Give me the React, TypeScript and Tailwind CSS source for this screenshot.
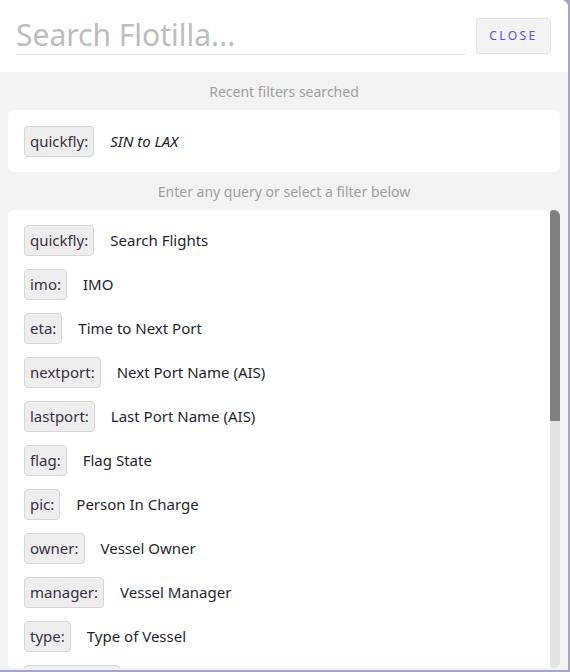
import React from 'react';

const recent = [{ key: 'quickfly:', value: 'SIN to LAX' }];

const filters = [
  { key: 'quickfly:', label: 'Search Flights' },
  { key: 'imo:', label: 'IMO' },
  { key: 'eta:', label: 'Time to Next Port' },
  { key: 'nextport:', label: 'Next Port Name (AIS)' },
  { key: 'lastport:', label: 'Last Port Name (AIS)' },
  { key: 'flag:', label: 'Flag State' },
  { key: 'pic:', label: 'Person In Charge' },
  { key: 'owner:', label: 'Vessel Owner' },
  { key: 'manager:', label: 'Vessel Manager' },
  { key: 'type:', label: 'Type of Vessel' },
  { key: 'destination:', label: 'Destination (AIS)' },
];

const Chip = ({ children }: { children: React.ReactNode }) => (
  <span className="inline-flex h-[31px] items-center rounded-[4px] border border-[#d6d6d6] bg-[#eeeeee] px-[5px] text-[15px] text-[#3a2f44]">
    {children}
  </span>
);

export default function App() {
  return (
    <div className="h-[672px] w-[570px] overflow-hidden bg-[#a3a6c8] font-['Noto_Sans',sans-serif]">
      <div className="flex h-[670px] w-[568px] flex-col overflow-hidden rounded-tr-[7px] bg-[#f3f3f3]">
        {/* search header */}
        <div className="flex h-[72px] shrink-0 items-start gap-[10px] bg-white pl-[16px] pr-[17px] pt-[17px]">
          <div className="flex-1 border-b border-[#e3e3e3] pb-[1px]">
            <input
              placeholder="Search Flotilla..."
              className="w-full bg-transparent text-[30px] leading-[36px] text-[#333] outline-none placeholder:text-[#bdbdbd]"
            />
          </div>
          <button className="mt-[1px] h-[36px] w-[75px] rounded-[4px] border border-[#e0e0e0] bg-[#f3f3f3] text-[12px] tracking-[0.2em] text-[#5b4ef0]">
            CLOSE
          </button>
        </div>

        <div className="flex min-h-0 flex-1 flex-col px-[8px] pb-[2px]">
          <p className="pb-[8px] pt-[10px] text-center text-[14px] leading-[20px] text-[#9e9e9e]">Recent filters searched</p>
          <div className="flex h-[62px] shrink-0 flex-col justify-center rounded-[6px] bg-white px-[16px]">
            {recent.map((r) => (
              <div key={r.key} className="flex items-center gap-[16px]">
                <Chip>{r.key}</Chip>
                <span className="text-[15px] italic text-[#222]">{r.value}</span>
              </div>
            ))}
          </div>
          <p className="pb-[8px] pt-[10px] text-center text-[14px] leading-[20px] text-[#9e9e9e]">
            Enter any query or select a filter below
          </p>
          <div className="flex min-h-0 flex-1 overflow-hidden rounded-[6px] bg-white">
            <ul className="flex min-w-0 flex-1 flex-col gap-[13px] overflow-hidden px-[16px] pt-[15px]">
              {filters.map((f) => (
                <li key={f.key} className="flex shrink-0 items-center gap-[16px]">
                  <Chip>{f.key}</Chip>
                  <span className="text-[15px] text-[#1f1f2e]">{f.label}</span>
                </li>
              ))}
            </ul>
            {/* scrollbar */}
            <div className="flex w-[10px] shrink-0 flex-col">
              <div className="h-[211px] rounded-t-[3px] bg-[#808080]" />
              <div className="flex-1 rounded-b-[3px] bg-[#e3e3e3]" />
            </div>
          </div>
        </div>
      </div>
    </div>
  );
}
